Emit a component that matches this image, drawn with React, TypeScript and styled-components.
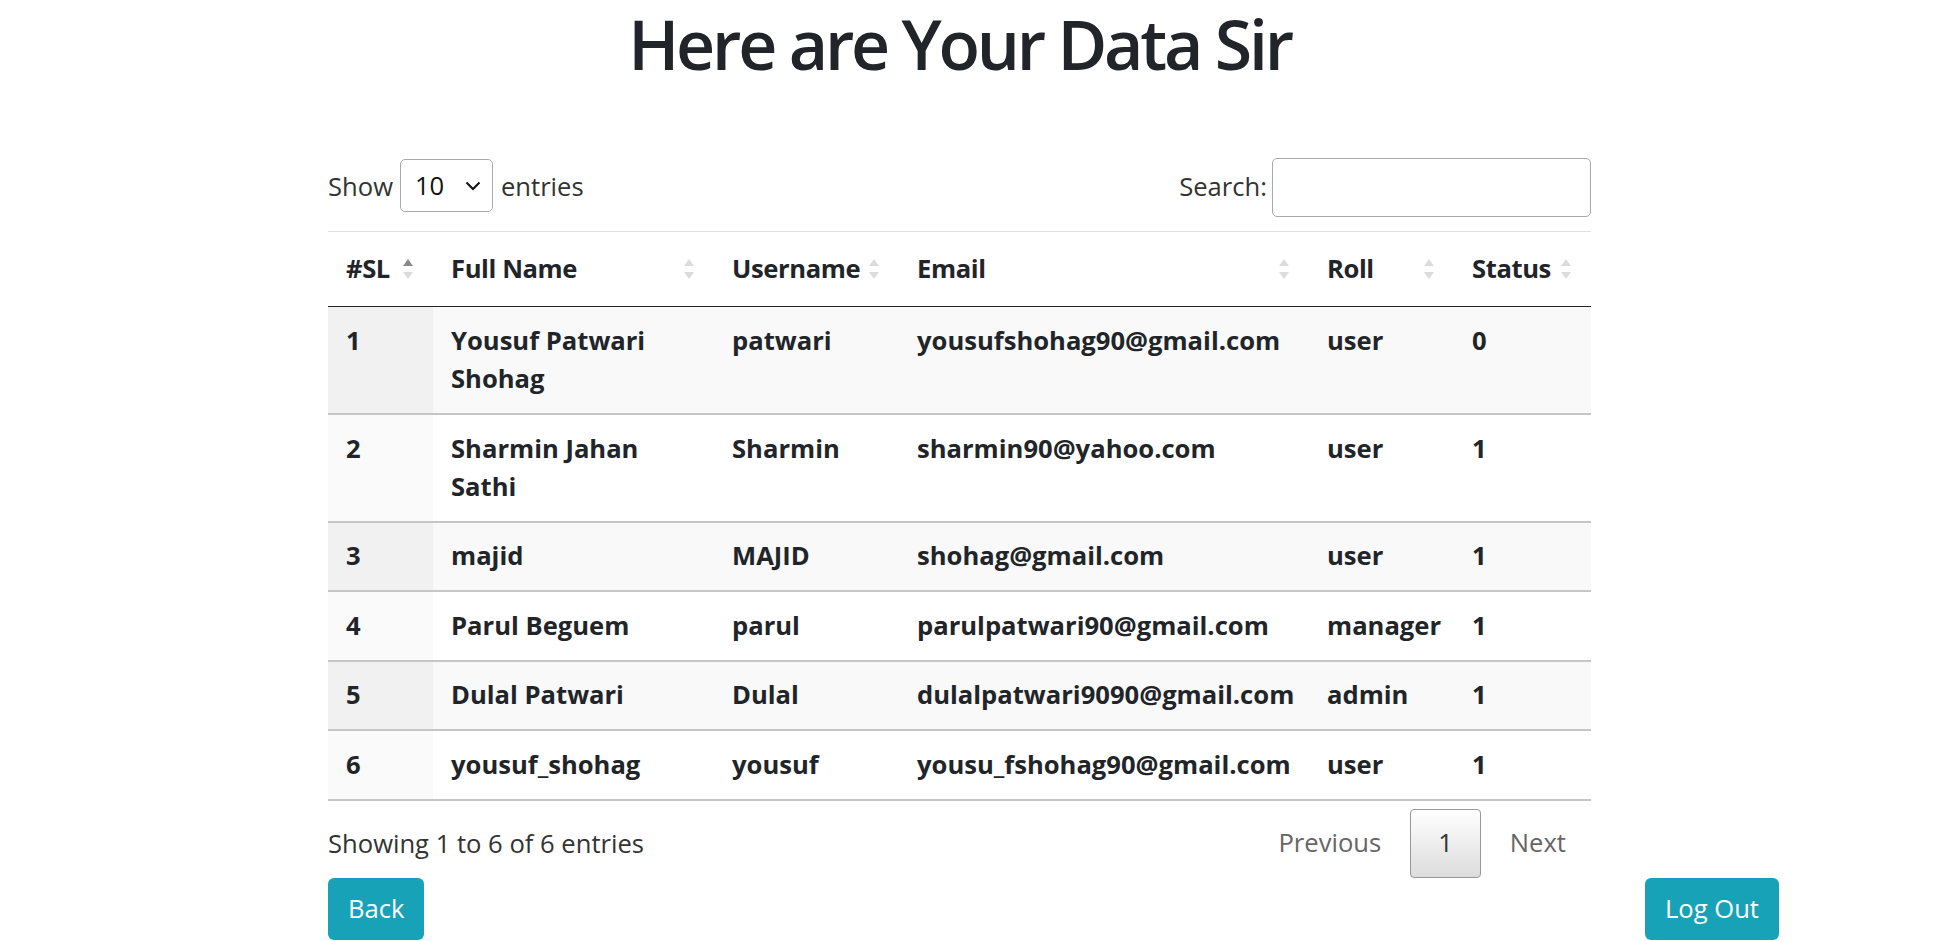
import styled, { createGlobalStyle } from 'styled-components';

type User = {
	sl: number;
	name: string;
	username: string;
	email: string;
	roll: string;
	status: number;
};

const users: User[] = [
	{ sl: 1, name: 'Yousuf Patwari Shohag', username: 'patwari', email: 'yousufshohag90@gmail.com', roll: 'user', status: 0 },
	{ sl: 2, name: 'Sharmin Jahan Sathi', username: 'Sharmin', email: 'sharmin90@yahoo.com', roll: 'user', status: 1 },
	{ sl: 3, name: 'majid', username: 'MAJID', email: 'shohag@gmail.com', roll: 'user', status: 1 },
	{ sl: 4, name: 'Parul Beguem', username: 'parul', email: 'parulpatwari90@gmail.com', roll: 'manager', status: 1 },
	{ sl: 5, name: 'Dulal Patwari', username: 'Dulal', email: 'dulalpatwari9090@gmail.com', roll: 'admin', status: 1 },
	{ sl: 6, name: 'yousuf_shohag', username: 'yousuf', email: 'yousu_fshohag90@gmail.com', roll: 'user', status: 1 },
];

const columns = [
	{ label: '#SL', width: 105, active: true },
	{ label: 'Full Name', width: 281, active: false },
	{ label: 'Username', width: 185, active: false },
	{ label: 'Email', width: 410, active: false },
	{ label: 'Roll', width: 145, active: false },
	{ label: 'Status', width: 137, active: false },
];

function App() {
	return (
		<>
			<GlobalStyle />
			<Page>
				<Content>
					<Title>Here are Your Data Sir</Title>
					<Controls>
						<Label>
							Show
							<SelectWrap>
								<Select defaultValue="10">
									<option>10</option>
									<option>25</option>
									<option>50</option>
									<option>100</option>
								</Select>
								<Chevron width="16" height="10" viewBox="0 0 16 10">
									<path d="M1.5 1.5 L8 8 L14.5 1.5" fill="none" stroke="#111" strokeWidth="2" />
								</Chevron>
							</SelectWrap>
							entries
						</Label>
						<Label>
							Search:
							<SearchInput type="search" />
						</Label>
					</Controls>
					<Table>
						<colgroup>
							{columns.map(c => (
								<col key={c.label} style={{ width: c.width }} />
							))}
						</colgroup>
						<thead>
							<tr>
								{columns.map(c => (
									<Th key={c.label}>
										<HeadInner>
											{c.label}
											<SortIcons>
												<ArrowUp $active={c.active} />
												<ArrowDown />
											</SortIcons>
										</HeadInner>
									</Th>
								))}
							</tr>
						</thead>
						<tbody>
							{users.map((u, i) => (
								<Row key={u.sl} $striped={i % 2 === 0}>
									<Td $sorted>{u.sl}</Td>
									<Td>{u.name}</Td>
									<Td>{u.username}</Td>
									<Td>{u.email}</Td>
									<Td>{u.roll}</Td>
									<Td>{u.status}</Td>
								</Row>
							))}
						</tbody>
					</Table>
					<Footer>
						<Info>Showing 1 to 6 of 6 entries</Info>
						<Pagination>
							<PageItem>Previous</PageItem>
							<PageItem $current>1</PageItem>
							<PageItem>Next</PageItem>
						</Pagination>
					</Footer>
				</Content>
				<ButtonsRow>
					<InfoButton>Back</InfoButton>
					<InfoButton>Log Out</InfoButton>
				</ButtonsRow>
			</Page>
		</>
	);
}

export default App;

const GlobalStyle = createGlobalStyle`
	body {
		margin: 0;
		background: #fff;
		font-family: "Open Sans", "Noto Sans", sans-serif;
		font-size: 25.6px;
		line-height: 1.5;
		color: #212529;
	}
`

const Page = styled.div`
	display: flex;
	flex-direction: column;
	padding-left: 328px;
`

const Content = styled.div`
	display: flex;
	flex-direction: column;
	width: 1263px;
`

const Title = styled.h1`
	margin: 0;
	text-align: center;
	font-size: 68px;
	font-weight: 600;
	line-height: 88px;
	letter-spacing: -3.2px;
	color: #212529;
`

const Controls = styled.div`
	display: flex;
	justify-content: space-between;
	align-items: center;
	margin-top: 70px;
	height: 59px;
	color: #333;
`

const Label = styled.label`
	display: flex;
	align-items: center;
	gap: 6px;
`

const SelectWrap = styled.div`
	position: relative;
	display: flex;
	margin: -4px 2px 0 1px;
`

const Select = styled.select`
	appearance: none;
	width: 93px;
	height: 53px;
	padding: 0 0 0 14px;
	border: 1px solid #aaa;
	border-radius: 5px;
	background: #fff;
	font-family: inherit;
	font-size: 25.6px;
	color: #111;
`

const Chevron = styled.svg`
	position: absolute;
	right: 12px;
	top: 22px;
	pointer-events: none;
`

const SearchInput = styled.input`
	width: 319px;
	height: 59px;
	box-sizing: border-box;
	border: 1px solid #aaa;
	border-radius: 5px;
	margin-left: -1px;
	font-size: 25.6px;
`

const Table = styled.table`
	margin-top: 14px;
	width: 1263px;
	table-layout: fixed;
	border-collapse: collapse;
	border-top: 1px solid #dee2e6;
`

const Th = styled.th`
	padding: 18px;
	text-align: left;
	font-weight: 700;
	letter-spacing: -0.4px;
	border-bottom: 1px solid #212529;
	white-space: nowrap;
`

const HeadInner = styled.div`
	display: flex;
	justify-content: space-between;
	align-items: center;
`

const SortIcons = styled.div`
	display: flex;
	flex-direction: column;
	gap: 6px;
	margin-right: 2px;
	flex-shrink: 0;
`

const ArrowUp = styled.span<{ $active?: boolean }>`
	width: 0;
	height: 0;
	border-left: 5px solid transparent;
	border-right: 5px solid transparent;
	border-bottom: 7px solid ${props => props.$active ? '#8a8a8a' : '#dcdcdc'};
`

const ArrowDown = styled.span`
	width: 0;
	height: 0;
	border-left: 5px solid transparent;
	border-right: 5px solid transparent;
	border-top: 7px solid #dcdcdc;
`

const Row = styled.tr<{ $striped: boolean }>`
	background: ${props => props.$striped ? '#f9f9f9' : '#fff'};

	& > td:first-child {
		background: ${props => props.$striped ? '#f1f1f1' : '#fafafa'};
	}
`

const Td = styled.td<{ $sorted?: boolean }>`
	padding: 14.5px 18px;
	vertical-align: top;
	font-weight: 700;
	border-bottom: 2px solid #c6c6c6;
	white-space: ${props => props.$sorted ? 'nowrap' : 'normal'};
`

const Footer = styled.div`
	display: flex;
	justify-content: space-between;
	align-items: center;
	margin-top: 8px;
	height: 69px;
	color: #333;
`

const Info = styled.div`
	padding-top: 2px;
`

const Pagination = styled.div`
	display: flex;
	align-items: center;
	gap: 4px;
`

const PageItem = styled.span<{ $current?: boolean }>`
	display: flex;
	align-items: center;
	justify-content: center;
	height: 69px;
	box-sizing: border-box;
	padding: 0 ${props => props.$current ? '27px' : '24px'};
	border: 1px solid ${props => props.$current ? '#979797' : 'transparent'};
	border-radius: 4px;
	background: ${props => props.$current ? 'linear-gradient(to bottom, #fff 0%, #dcdcdc 100%)' : 'transparent'};
	color: ${props => props.$current ? '#333' : '#666'};
`

const ButtonsRow = styled.div`
	display: flex;
	justify-content: space-between;
	width: 1451px;
`

const InfoButton = styled.button`
	height: 62px;
	padding: 0 20px;
	border: none;
	border-radius: 6px;
	background: #17a2b8;
	color: #fff;
	font-family: inherit;
	font-size: 25.6px;
	cursor: pointer;
`
